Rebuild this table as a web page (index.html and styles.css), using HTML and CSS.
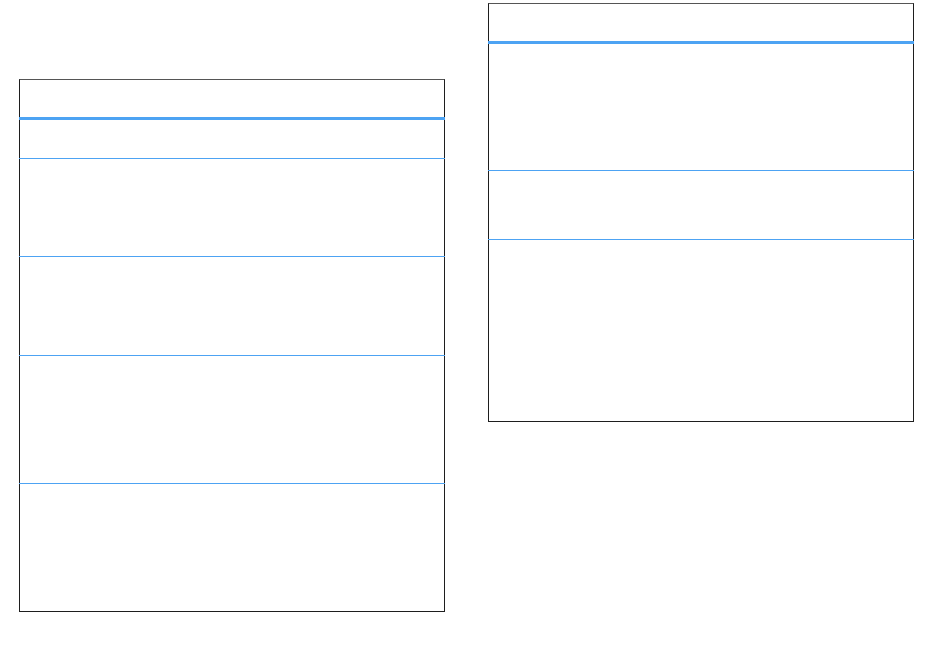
FILE: index.html
```html
<!DOCTYPE html>
<html lang="en">
<head>
  <meta charset="UTF-8">
  <meta name="viewport" content="width=device-width, initial-scale=1.0">
  <title>Tables</title>
  <link rel="stylesheet" href="styles.css">
</head>
<body>
  <div class="page">
    <!-- left table -->
    <div class="sheet sheet-left">
      <div class="row head"></div>
      <div class="row r38 first"></div>
      <div class="row r97"></div>
      <div class="row r98"></div>
      <div class="row r127"></div>
      <div class="row r127"></div>
    </div>

    <!-- right table -->
    <div class="sheet sheet-right">
      <div class="row head"></div>
      <div class="row r126 first"></div>
      <div class="row r68"></div>
      <div class="row r181"></div>
    </div>
  </div>
</body>
</html>
```

FILE: styles.css
```css
* {
  margin: 0;
  padding: 0;
  box-sizing: border-box;
}
body {
  background: #fff;
  font-family: 'Liberation Sans', Arial, sans-serif;
}
.page {
  display: flex;
  align-items: flex-start;
  gap: 43px;
  padding-left: 19px;
}
.sheet {
  width: 426px;
  border: 1px solid #1e1e1e;
  border-top-color: #555;
  display: flex;
  flex-direction: column;
}
.sheet-left {
  margin-top: 79px;
}
.sheet-right {
  margin-top: 3px;
}
.row {
  border-top: 1px solid #4da3f3;
  margin: 0 -1px;
}
.row.head {
  height: 37px;
  border-top: none;
  margin: 0;
}
.row.first {
  border-top: 3px solid #4da3f3;
}
.r38 { height: 41px; }
.r126 { height: 129px; }
.r68 { height: 69px; }
.r97 { height: 98px; }
.r98 { height: 99px; }
.r127 { height: 128px; }
.r181 { height: 182px; }
```
